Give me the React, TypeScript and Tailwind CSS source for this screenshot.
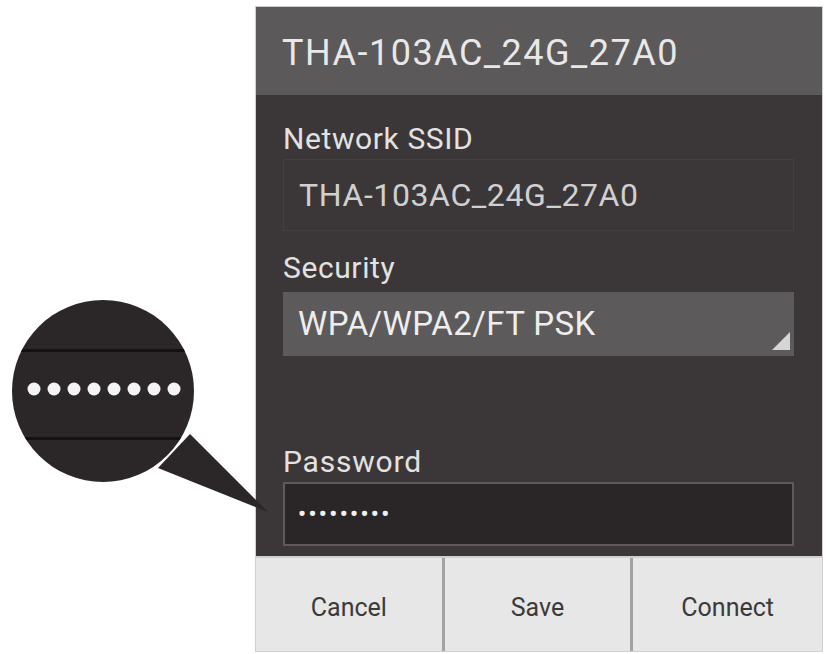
import React from "react";

// Android-style Wi-Fi dialog with a magnifier bubble pointing at the password field
function Bubble() {
  const dots = [34, 54, 74, 94, 114, 134, 154, 174];
  return (
    <svg className="absolute left-0 top-0" width="300" height="540" viewBox="0 0 300 540">
      <defs>
        <clipPath id="bubble-clip">
          <circle cx="103" cy="391" r="91" />
        </clipPath>
      </defs>
      <polygon points="158,468 190,434 268,512" fill="#2b2728" />
      <circle cx="103" cy="391" r="91" fill="#2b2728" />
      <g clipPath="url(#bubble-clip)">
        <rect x="0" y="349" width="300" height="3" fill="#141112" />
        <rect x="0" y="437" width="300" height="3" fill="#141112" />
      </g>
      {dots.map((x) => (
        <circle key={x} cx={x} cy="389" r="6.5" fill="#f4f4f4" />
      ))}
    </svg>
  );
}

export default function App() {
  return (
    <div className="relative w-[826px] h-[654px] bg-white overflow-hidden font-['Roboto',sans-serif]">
      <div className="ml-[255px] mt-[6px] w-[568px] border border-[#cfcfcf] flex flex-col">
        {/* Title bar */}
        <div className="h-[88px] bg-[#5b595a] flex items-center pl-[26px]">
          <span className="text-[36px] leading-[40px] text-[#e8e8e8] tracking-[1.5px] mt-[3px]">THA-103AC_24G_27A0</span>
        </div>

        {/* Form body */}
        <div className="bg-[#3b3738] pl-[27px] pr-[28px] pt-[26px] pb-[10px] flex flex-col">
          <span className="text-[30px] leading-[36px] text-[#e2e2e2] tracking-[0.6px]">Network SSID</span>
          <div className="mt-[2px] h-[72px] border border-[#444041] flex items-center pl-[15px]">
            <span className="text-[32px] leading-[40px] text-[#d0d0d0] tracking-[0.6px]">THA-103AC_24G_27A0</span>
          </div>

          <span className="mt-[19px] text-[30px] leading-[36px] text-[#e2e2e2] tracking-[0.6px]">Security</span>
          <div className="mt-[6px] relative h-[64px] bg-[#5c5a5b] flex items-center pl-[15px]">
            <span className="text-[33px] leading-[40px] text-[#eeeeee] tracking-[0.4px]">WPA/WPA2/FT PSK</span>
            <svg className="absolute right-[4px] bottom-[6px]" width="18" height="18" viewBox="0 0 18 18">
              <polygon points="18,0 18,18 0,18" fill="#d6d6d6" />
            </svg>
          </div>

          <span className="mt-[88px] text-[30px] leading-[36px] text-[#e2e2e2] tracking-[0.8px]">Password</span>
          <div className="mt-[2px] h-[64px] bg-[#2a2627] border-2 border-[#5e5a5b] flex items-center pl-[13px]">
            <span className="text-[22px] leading-[20px] font-bold text-[#f0f0f0] tracking-[2.5px]">•••••••••</span>
          </div>
        </div>

        {/* Buttons */}
        <div className="border-t-2 border-[#cfcfcf] grid grid-cols-3 h-[95px] bg-[#e7e7e7] divide-x-[3px] divide-[#a3a3a3]">
          <div className="flex items-center justify-center text-[25px] text-[#3a3a3a] pt-[6px]">Cancel</div>
          <div className="flex items-center justify-center text-[25px] text-[#3a3a3a] pt-[6px]">Save</div>
          <div className="flex items-center justify-center text-[25px] text-[#3a3a3a] pt-[6px]">Connect</div>
        </div>
      </div>

      <Bubble />
    </div>
  );
}
